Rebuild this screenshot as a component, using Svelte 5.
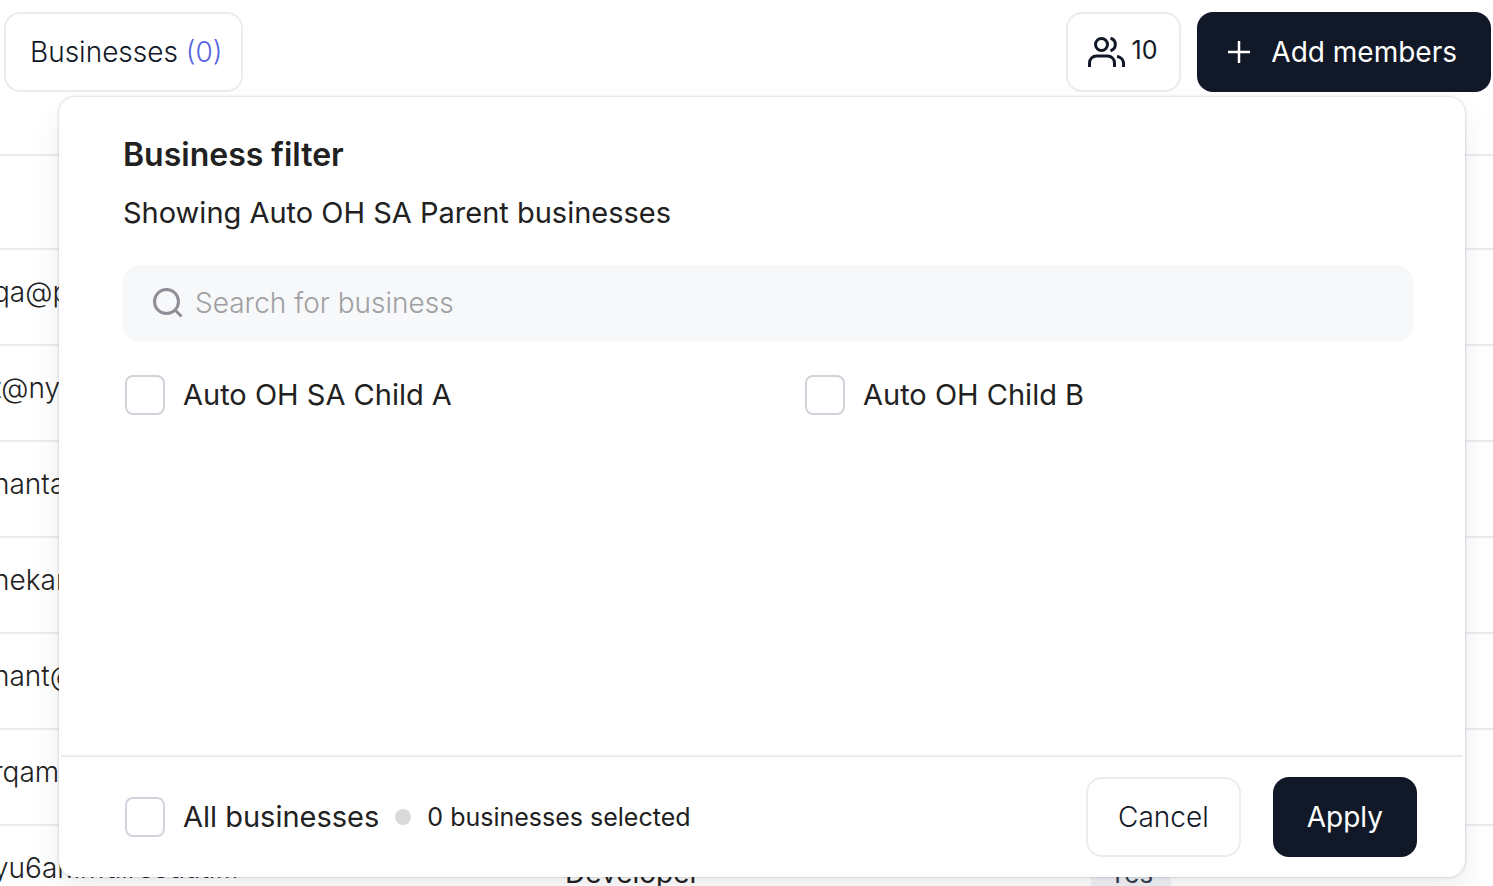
<script>
  const members = [
    { email: 'qa@p', role: 'Developer', access: 'Yes' },
    { email: 't@ny', role: 'Developer', access: 'Yes' },
    { email: 'hanta', role: 'Developer', access: 'Yes' },
    { email: 'nekar', role: 'Developer', access: 'Yes' },
    { email: 'hant@', role: 'Developer', access: 'Yes' },
    { email: 'rqam', role: 'Developer', access: 'Yes' },
    { email: 'yu6ar.imdiresdati...', role: 'Developer', access: 'Yes' }
  ];

  let businesses = $state([
    { id: 'child-a', name: 'Auto OH SA Child A', checked: false },
    { id: 'child-b', name: 'Auto OH Child B', checked: false }
  ]);
  let query = $state('');

  const selected = $derived(businesses.filter((b) => b.checked).length);
  const shown = $derived(
    businesses.filter((b) => b.name.toLowerCase().includes(query.toLowerCase()))
  );

  function toggleAll(event) {
    for (const b of businesses) b.checked = event.currentTarget.checked;
  }

  function clear() {
    for (const b of businesses) b.checked = false;
  }
</script>

<div class="page">
  <header class="toolbar">
    <button class="btn outline filter" type="button">
      Businesses <span class="count">({selected})</span>
    </button>
    <div class="actions">
      <button class="btn outline seats" type="button">
        <svg width="40" height="40" viewBox="0 0 40 40" fill="none" stroke="currentColor" stroke-width="3" aria-hidden="true">
          <circle cx="15.500" cy="12.500" r="6" />
          <path d="M3.500 35v-4a7 7 0 0 1 7-7h11a7 7 0 0 1 7 7V35" />
          <path d="M24.500 6.300a6.400 6.400 0 0 1 0 12.400" />
          <path d="M31 24.600a7 7 0 0 1 6.500 6.400V35" />
        </svg>
        <span class="seat-count">10</span>
      </button>
      <button class="btn solid add" type="button">
        <svg width="24" height="24" viewBox="0 0 24 24" fill="none" stroke="currentColor" stroke-width="2.500" aria-hidden="true">
          <path d="M12 1v22M1 12h22" />
        </svg>
        Add members
      </button>
    </div>
  </header>

  <table class="members">
    <thead>
      <tr><th></th><th></th><th></th></tr>
    </thead>
    <tbody>
      {#each members as m}
        <tr>
          <td class="email">{m.email}</td>
          <td>{m.role}</td>
          <td><span class="chip">{m.access}</span></td>
        </tr>
      {/each}
    </tbody>
  </table>

  <section class="popover" aria-labelledby="filter-title">
    <div class="content">
      <h2 id="filter-title">Business filter</h2>
      <p class="subtitle">Showing Auto OH SA Parent businesses</p>
      <label class="search">
        <svg width="32" height="32" viewBox="0 0 32 32" fill="none" stroke="currentColor" stroke-width="3" aria-hidden="true">
          <circle cx="15.500" cy="14.500" r="12" />
          <path d="M24 23l6.500 6.500" />
        </svg>
        <input type="text" placeholder="Search for business" aria-label="Search for business" bind:value={query} />
      </label>
      <div class="options">
        {#each shown as b (b.id)}
          <label class="check">
            <input type="checkbox" bind:checked={b.checked} />
            {b.name}
          </label>
        {/each}
      </div>
    </div>
    <footer>
      <label class="check">
        <input type="checkbox" checked={selected === businesses.length} onchange={toggleAll} />
        All businesses
      </label>
      <span class="dot"></span>
      <span class="status">{selected} businesses selected</span>
      <div class="buttons">
        <button class="btn outline cancel" type="button" onclick={clear}>Cancel</button>
        <button class="btn solid apply" type="button">Apply</button>
      </div>
    </footer>
  </section>
</div>

<style>
  :global(body) {
    margin: 0;
    background: #fff;
  }
  .page {
    position: relative;
    height: 100vh;
    overflow: hidden;
    font-family: Inter, sans-serif;
    font-size: 28px;
    line-height: 40px;
    color: #212121;
  }
  .toolbar {
    display: flex;
    justify-content: space-between;
    padding: 12px 2px 0 4px;
  }
  .actions,
  .buttons {
    display: flex;
    gap: 16px;
  }
  .btn {
    box-sizing: border-box;
    display: flex;
    align-items: center;
    height: 80px;
    border: 2px solid #e9edf1;
    border-radius: 16px;
    background: #fff;
    color: #111827;
    font: inherit;
    font-weight: 300;
    white-space: pre;
    cursor: pointer;
  }
  .btn.solid {
    border-color: #111827;
    background: #111827;
    color: #fff;
    font-weight: 400;
  }
  .filter {
    padding: 0 18px 0 24px;
  }
  .count {
    color: #5a67e0;
  }
  .seats {
    gap: 6px;
    padding: 0 22px 0 18px;
  }
  .seat-count {
    padding-bottom: 4px;
    font-size: 25px;
    font-weight: 400;
  }
  .add {
    gap: 12px;
    padding: 0 32px 0 28px;
  }
  .members {
    width: 100%;
    margin-top: 62px;
    border-collapse: separate;
    border-spacing: 0;
    table-layout: fixed;
    border-top: 2px solid #ececf2;
  }
  th,
  td {
    box-sizing: border-box;
    height: 96px;
    padding: 0;
    border-bottom: 2px solid #e9edf1;
    text-align: left;
  }
  th {
    height: 94px;
  }
  th:first-child {
    width: 565px;
  }
  th:last-child {
    width: 402px;
  }
  td.email {
    padding-bottom: 10px;
    text-indent: -7px;
    font-weight: 300;
  }
  .chip {
    display: inline-block;
    box-sizing: border-box;
    width: 80px;
    border-radius: 8px;
    background: #f1f3f6;
    color: #374151;
    font-size: 26px;
    text-align: center;
  }
  .popover {
    position: absolute;
    top: 97px;
    right: 28px;
    bottom: 9px;
    left: 59px;
    display: flex;
    flex-direction: column;
    border-radius: 16px;
    background: #fff;
    box-shadow:
      0 0 3px rgba(40, 41, 80, 0.28),
      0 16px 32px rgba(0, 0, 0, 0.07);
  }
  .content {
    flex: 1;
    padding: 38px 52px 0 64px;
  }
  h2 {
    margin: 0;
    font-size: 32px;
    font-weight: 600;
  }
  .subtitle {
    margin: 18px 0 32px;
    font-size: 29px;
  }
  .search {
    display: flex;
    align-items: center;
    gap: 12px;
    height: 76px;
    padding: 0 28px;
    border-radius: 16px;
    background: #f7f8fa;
    color: #8e8e96;
  }
  .search input {
    flex: 1;
    min-width: 0;
    padding: 0;
    border: 0;
    outline: 0;
    background: none;
    color: #212121;
    font: inherit;
    font-weight: 300;
  }
  .search input::placeholder {
    color: #a0a0a3;
    opacity: 1;
  }
  .options {
    display: grid;
    grid-template-columns: 1fr 1fr;
    gap: 24px 72px;
    margin: 34px 0 0 2px;
  }
  .check {
    display: flex;
    align-items: center;
    gap: 18px;
    font-size: 29px;
  }
  .check input {
    appearance: none;
    box-sizing: border-box;
    width: 40px;
    height: 40px;
    margin: 0;
    border: 2px solid #d1d5db;
    border-radius: 8px;
    background: #fff;
  }
  .check input:checked {
    background: #111827;
  }
  footer {
    display: flex;
    align-items: center;
    margin: 0 2px;
    padding: 20px 46px 20px 64px;
    border-radius: 0 0 16px 16px;
    background: #fff;
    box-shadow: 0 -1px 3px rgba(0, 0, 0, 0.16);
    clip-path: inset(-8px 0 0 0);
  }
  .dot {
    width: 16px;
    height: 16px;
    margin: 0 16px;
    border-radius: 50%;
    background: #d9d9d9;
  }
  .status {
    font-size: 25px;
  }
  .buttons {
    gap: 32px;
    margin-left: auto;
  }
  .cancel {
    padding: 0 30px;
  }
  .apply {
    padding: 0 32px;
  }
</style>
